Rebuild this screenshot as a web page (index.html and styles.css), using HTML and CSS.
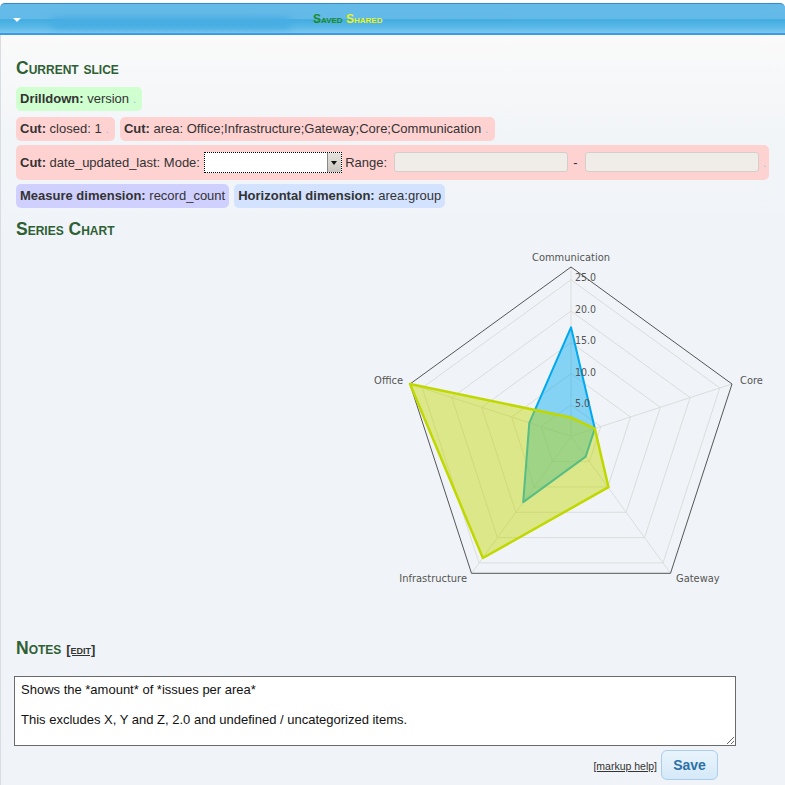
FILE: index.html
```html
<!DOCTYPE html>
<html>
<head>
<meta charset="utf-8">
<link rel="stylesheet" href="styles.css">
</head>
<body>
<div class="topbar">
  <span class="toggle"></span>
  <span class="redacted"></span>
  <span class="status"><span class="saved">Saved</span> <span class="shared">Shared</span></span>
</div>
<div class="main">
  <h2 class="heading h-slice">Current slice</h2>
  <div class="row row-1">
    <span class="chip chip-drill"><b>Drilldown:</b> version <a class="dot">.</a></span>
  </div>
  <div class="row row-2">
    <span class="chip chip-cut"><b>Cut:</b> closed: 1 <a class="dot">.</a></span>
    <span class="chip chip-cut"><b>Cut:</b> area: Office;Infrastructure;Gateway;Core;Communication <a class="dot">.</a></span>
  </div>
  <div class="row row-3">
    <span class="chip chip-cut chip-wide"><b>Cut:</b> date_updated_last: Mode: <span class="select"><span class="select-value"></span><span class="select-btn"><span class="select-tri"></span></span></span> Range: <span class="field"></span> <span class="dash">-</span> <span class="field"></span> <a class="dot">.</a></span>
  </div>
  <div class="row row-4">
    <span class="chip chip-measure"><b>Measure dimension:</b> record_count</span>
    <span class="chip chip-horiz"><b>Horizontal dimension:</b> area:group</span>
  </div>
  <h2 class="heading h-chart">Series Chart</h2>
  <div class="chart">
    <svg width="753" height="375" viewBox="0 0 753 375">
      <g transform="translate(-16,-240)">
        <g class="spokes">
          <line x1="571" y1="437.3" x2="571" y2="268"/>
          <line x1="571" y1="437.3" x2="732" y2="385"/>
          <line x1="571" y1="437.3" x2="670.5" y2="574.3"/>
          <line x1="571" y1="437.3" x2="471.5" y2="574.3"/>
          <line x1="571" y1="437.3" x2="410" y2="385"/>
        </g>
        <g class="grid">
          <polygon points="571,406 600.8,427.6 589.4,462.6 552.6,462.6 541.2,427.6"/>
          <polygon points="571,374.7 630.5,418 607.8,487.9 534.2,487.9 511.5,418"/>
          <polygon points="571,343.4 660.3,408.3 626.2,513.3 515.8,513.3 481.7,408.3"/>
          <polygon points="571,312.1 690.1,398.6 644.6,538.6 497.4,538.6 451.9,398.6"/>
          <polygon points="571,280.8 719.8,388.9 663,563.9 479,563.9 422.2,388.9"/>
        </g>
        <polygon class="outer" points="571,268 732,385 670.5,574.3 471.5,574.3 410,385"/>
        <polygon class="series-blue" points="571,328.3 594.8,429.6 585.7,457.6 523.2,503.1 529.3,423.8"/>
        <polygon class="series-green" points="571,418.5 594.8,429.6 608.5,488.2 482.9,559 410,385"/>
        <text class="scale" x="575" y="282">25.0</text>
        <text class="scale" x="575" y="313.6">20.0</text>
        <text class="scale" x="575" y="344.8">15.0</text>
        <text class="scale" x="575" y="376.5">10.0</text>
        <text class="scale" x="575" y="407.8">5.0</text>
        <text class="axis" x="571" y="262" text-anchor="middle">Communication</text>
        <text class="axis" x="740" y="385">Core</text>
        <text class="axis" x="403" y="385" text-anchor="end">Office</text>
        <text class="axis" x="467" y="583" text-anchor="end">Infrastructure</text>
        <text class="axis" x="676" y="583">Gateway</text>
      </g>
    </svg>
  </div>
  <h2 class="heading h-notes">Notes <a class="edit">[edit]</a></h2>
  <textarea class="notes">Shows the *amount* of *issues per area*

This excludes X, Y and Z, 2.0 and undefined / uncategorized items.</textarea>
  <div class="actions">
    <a class="help">[markup help]</a>
    <button class="save">Save</button>
  </div>
</div>
</body>
</html>
```
FILE: styles.css
```css
html, body {
  margin: 0;
  padding: 0;
}
body {
  background: #fff;
  font-family: "Liberation Sans", Arial, sans-serif;
  font-size: 13px;
  color: #333;
  width: 785px;
  height: 785px;
  overflow: hidden;
}
.topbar {
  margin-top: 3px;
  height: 29px;
  border-top: 1px solid #2f8bd6;
  border-bottom: 2px solid #3a9be2;
  border-radius: 5px 5px 0 0;
  background: linear-gradient(to bottom, #65bbe8 0%, #63b9e7 50%, #43ade1 54%, #5ab9e8 80%, #7cc7ee 100%);
  display: flex;
  align-items: center;
}
.toggle {
  width: 0;
  height: 0;
  margin-left: 13px;
  border-left: 4px solid transparent;
  border-right: 4px solid transparent;
  border-top: 4px solid #fff;
  margin-top: 2px;
}
.redacted {
  width: 240px;
  height: 12px;
  margin-left: 30px;
  margin-top: 8px;
  border-radius: 6px;
  background: #48ade2;
  filter: blur(3px);
}
.status {
  margin-left: 22px;
  margin-top: 1px;
  font-weight: bold;
  font-variant: small-caps;
  font-size: 12px;
}
.saved { color: #1b8a1b; }
.shared { color: #e9f31c; }

.main {
  border-left: 1px solid #d9dde2;
  padding: 0 0 0 15px;
  height: 750px;
  background: linear-gradient(to bottom, #fafafa 0px, #f2f5f8 100px, #f0f4f8 200px);
}
.heading {
  margin: 0;
  font-size: 17.5px;
  line-height: 20px;
  font-weight: bold;
  font-variant: small-caps;
  color: #2e6033;
}
.h-slice { padding-top: 23px; margin-bottom: 9px; }
.h-chart { margin-top: 11px; }
.h-notes { margin-top: 24px; }

.row {
  display: flex;
  gap: 5px;
  white-space: nowrap;
}
.row-1 { margin-bottom: 6px; }
.row-2 { margin-bottom: 4px; }
.row-3 { margin-bottom: 4px; }
.chip {
  display: inline-block;
  height: 24px;
  line-height: 24px;
  padding: 0 6px 0 4px;
  border-radius: 5px;
}
.chip b { font-weight: bold; }
.chip-drill { background: #d0ffd0; }
.chip-cut { background: #ffd2d2; }
.chip-measure { background: #d0d0ff; padding-right: 4px; }
.chip-horiz { background: #d2e2ff; padding-right: 4px; }
.chip-wide {
  height: 35px;
  line-height: 35px;
  width: 743px;
}
.dot {
  color: #a3c8e6;
}
.select {
  display: inline-flex;
  vertical-align: middle;
  width: 138px;
  height: 21px;
  background: #fff;
  border: 1px dotted #000;
  box-sizing: border-box;
  margin-top: -2px;
}
.select-value { flex: 1; }
.select-btn {
  width: 13px;
  height: 19px;
  background: linear-gradient(to bottom, #e6e3de, #c9c5be);
  border-left: 1px solid #888;
  display: flex;
  align-items: center;
  justify-content: center;
}
.select-tri {
  width: 0;
  height: 0;
  border-left: 3px solid transparent;
  border-right: 3px solid transparent;
  border-top: 4px solid #111;
}
.field {
  display: inline-block;
  vertical-align: middle;
  width: 174px;
  height: 20px;
  box-sizing: border-box;
  background: #f0ece8;
  border: 1px solid #d4cec8;
  border-radius: 3px;
  margin-top: -3px;
  margin-left: 3px;
}
.dash { margin: 0 1px 0 2px; }

.chart {
  height: 375px;
}
.chart svg { display: block; }
.spokes line { stroke: #dcdcdc; stroke-width: 1; }
.grid polygon { fill: none; stroke: #dcdcdc; stroke-width: 1; }
.outer { fill: none; stroke: #555; stroke-width: 1; }
.series-blue {
  fill: rgba(0, 168, 240, 0.45);
  stroke: #00a8f0;
  stroke-width: 2;
  stroke-linejoin: round;
}
.series-green {
  fill: rgba(192, 216, 0, 0.45);
  stroke: #c0d800;
  stroke-width: 2.5;
  stroke-linejoin: round;
}
.scale {
  font-family: "DejaVu Sans Condensed", "DejaVu Sans", sans-serif;
  font-size: 10.5px;
  fill: #545454;
}
.axis {
  font-family: "DejaVu Sans Condensed", Roboto, sans-serif;
  font-size: 11px;
  fill: #545454;
}
.edit {
  font-size: 13px;
  color: #333;
  text-decoration: underline;
  font-weight: bold;
}
.notes {
  display: block;
  margin: 16px 0 0 -2px;
  width: 722px;
  height: 70px;
  box-sizing: border-box;
  border: 1px solid #6a6a6a;
  background: #fff;
  padding: 5px 6px;
  font-family: "Liberation Sans", Arial, sans-serif;
  font-size: 13px;
  line-height: 15px;
  color: #111;
  resize: both;
  overflow: hidden;
}
.actions {
  display: flex;
  justify-content: flex-end;
  align-items: center;
  gap: 4px;
  width: 702px;
  margin-top: 4px;
}
.help {
  font-size: 10.5px;
  color: #333;
  text-decoration: underline;
  margin-top: 2px;
}
.save {
  width: 57px;
  height: 30px;
  border: 1px solid #a9cdea;
  border-radius: 6px;
  background: linear-gradient(to bottom, #e9f4fc, #d5e9f8);
  color: #2d70a8;
  font-family: "Liberation Sans", Arial, sans-serif;
  font-size: 14px;
  font-weight: bold;
  padding: 0;
}
```
